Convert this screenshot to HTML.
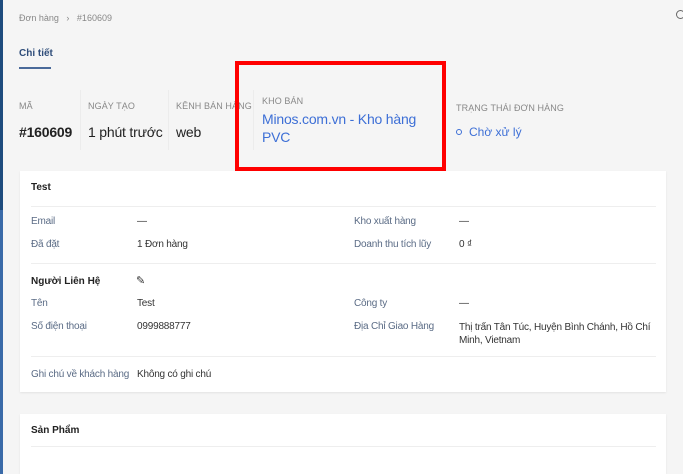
<!DOCTYPE html>
<html><head><meta charset="utf-8"><style>
*{margin:0;padding:0;box-sizing:border-box}
html,body{width:683px;height:474px;overflow:hidden}
body{background:#f5f5f5;font-family:"Liberation Sans","Noto Sans CJK SC",sans-serif;position:relative;color:#333}
.a{position:absolute;white-space:nowrap}
.lbl{font-size:10px;color:#5a6b85;letter-spacing:-.2px}
.val{font-size:10px;color:#333;letter-spacing:-.2px}
.hd{font-size:9px;color:#888;letter-spacing:.1px}
.big{font-size:14px;color:#222;letter-spacing:-.2px}
.card{position:absolute;left:20px;width:646px;background:#fff;box-shadow:0 1px 2px rgba(0,0,0,.08)}
.hr{position:absolute;left:31px;width:625px;height:1px;background:#eee}
.sep{position:absolute;top:90px;width:1px;height:60px;background:#ececec}
</style></head><body>
<div class="a" style="left:0;top:0;width:3px;height:210px;background:#1e4c7e"></div>
<div class="a" style="left:0;top:210px;width:3px;height:264px;background:#3a6aa8"></div>
<div class="a" style="left:19px;top:13px;font-size:9px;color:#888">Đơn hàng &nbsp;&nbsp;›&nbsp;&nbsp; #160609</div>
<div class="a" style="left:676px;top:10px;width:9px;height:9px;border:1.5px solid #666;border-radius:50%"></div>
<div class="a" style="left:19px;top:48px;font-size:10px;color:#2f4d7a;font-weight:bold">Chi tiết</div>
<div class="a" style="left:19px;top:67px;width:32px;height:2px;background:#4a6a9a"></div>
<div class="sep" style="left:80px"></div>
<div class="sep" style="left:168px"></div>
<div class="sep" style="left:253px"></div>
<div class="a hd" style="left:19px;top:101px">MÃ</div>
<div class="a big" style="left:19px;top:124px;font-weight:bold">#160609</div>
<div class="a hd" style="left:88px;top:101px">NGÀY TẠO</div>
<div class="a big" style="left:88px;top:124px">1 phút trước</div>
<div class="a hd" style="left:176px;top:101px">KÊNH BÁN HÀNG</div>
<div class="a big" style="left:176px;top:124px">web</div>
<div class="a hd" style="left:262px;top:96px">KHO BÁN</div>
<div class="a" style="left:262px;top:110px;font-size:14px;color:#3d6fd6;line-height:18px;letter-spacing:-.2px">Minos.com.vn - Kho hàng<br>PVC</div>
<div class="a hd" style="left:456px;top:103px">TRẠNG THÁI ĐƠN HÀNG</div>
<div class="a" style="left:456px;top:129px;width:6px;height:6px;border:1.5px solid #3d6fd6;border-radius:50%"></div>
<div class="a" style="left:469px;top:125px;font-size:12px;color:#3d6fd6">Chờ xử lý</div>
<div class="a" style="left:235px;top:61px;width:211px;height:110px;border:4px solid #f00"></div>
<div class="card" style="top:171px;height:221px"></div>
<div class="a" style="left:31px;top:182px;font-size:10px;font-weight:bold;color:#222">Test</div>
<div class="hr" style="top:206px"></div>
<div class="a lbl" style="left:31px;top:216px">Email</div><div class="a val" style="left:137px;top:216px">—</div>
<div class="a lbl" style="left:354px;top:216px">Kho xuất hàng</div><div class="a val" style="left:459px;top:216px">—</div>
<div class="a lbl" style="left:31px;top:239px">Đã đặt</div><div class="a val" style="left:137px;top:239px">1 Đơn hàng</div>
<div class="a lbl" style="left:354px;top:239px">Doanh thu tích lũy</div><div class="a val" style="left:459px;top:239px">0 ₫</div>
<div class="hr" style="top:263px"></div>
<div class="a" style="left:31px;top:276px;font-size:10px;font-weight:bold;color:#222">Người Liên Hệ</div>
<div class="a" style="left:136px;top:274px;font-size:11px;color:#333">✎</div>
<div class="a lbl" style="left:31px;top:298px">Tên</div><div class="a val" style="left:137px;top:298px">Test</div>
<div class="a lbl" style="left:354px;top:298px">Công ty</div><div class="a val" style="left:459px;top:298px">—</div>
<div class="a lbl" style="left:31px;top:321px">Số điện thoại</div><div class="a val" style="left:137px;top:321px">0999888777</div>
<div class="a lbl" style="left:354px;top:321px">Địa Chỉ Giao Hàng</div>
<div class="a val" style="left:459px;top:321px;line-height:13px">Thị trấn Tân Túc, Huyện Bình Chánh, Hồ Chí<br>Minh, Vietnam</div>
<div class="hr" style="top:356px"></div>
<div class="a lbl" style="left:31px;top:369px">Ghi chú về khách hàng</div><div class="a val" style="left:137px;top:369px">Không có ghi chú</div>
<div class="card" style="top:414px;height:60px"></div>
<div class="a" style="left:31px;top:425px;font-size:10px;font-weight:bold;color:#222">Sản Phẩm</div>
<div class="hr" style="top:446px"></div>
</body></html>
